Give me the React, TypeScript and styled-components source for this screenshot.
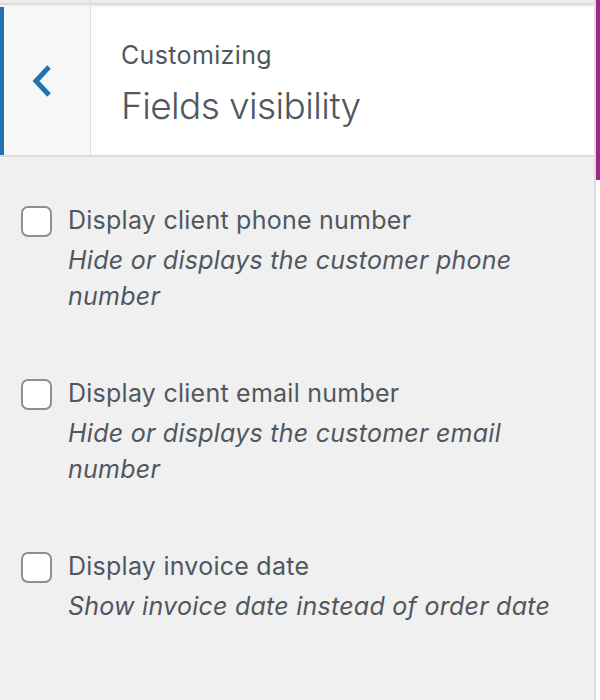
import React from "react";
import styled, { createGlobalStyle } from "styled-components";

const GlobalStyle = createGlobalStyle`
  html, body {
    margin: 0;
    padding: 0;
    background: #f0f0f0;
  }
  body {
    font-family: Inter, "Liberation Sans", Arial, sans-serif;
    color: #50575e;
  }
`;

interface Field {
  id: string;
  label: string;
  description: string;
}

const fields: Field[] = [
  {
    id: "phone",
    label: "Display client phone number",
    description: "Hide or displays the customer phone number",
  },
  {
    id: "email",
    label: "Display client email number",
    description: "Hide or displays the customer email number",
  },
  {
    id: "invoice-date",
    label: "Display invoice date",
    description: "Show invoice date instead of order date",
  },
];

const Page = styled.div`
  display: flex;
  width: 600px;
  min-height: 700px;
`;

const Panel = styled.div`
  width: 594px;
  border-right: 2px solid #dcdcde;
  background: #f0f0f0;
  display: flex;
  flex-direction: column;
`;

const SideStrip = styled.div`
  width: 4px;
  background: #ffffff;
`;

const Accent = styled.div`
  height: 180px;
  background: #a0268f;
`;

const TopStrip = styled.div`
  display: flex;
  height: 3px;
  border-bottom: 2px solid #dcdcde;
  margin-bottom: 1px;
  background: #ececec;
`;

const TopStripCell = styled.div`
  width: 90px;
  border-right: 1px solid #dcdcde;
`;

const Header = styled.div`
  display: flex;
  height: 148px;
  background: #ffffff;
  border-top: 1px solid #f0f0f0;
  border-bottom: 2px solid #dcdcde;
`;

const BackButton = styled.button`
  width: 91px;
  flex-shrink: 0;
  display: flex;
  align-items: center;
  justify-content: center;
  padding: 0 8px 0 0;
  margin: 0;
  background: #f6f7f7;
  border: none;
  border-left: 4px solid #2271b1;
  border-right: 1px solid #dcdcde;
  cursor: pointer;
`;

const TitleBlock = styled.div`
  display: flex;
  flex-direction: column;
  justify-content: center;
  padding: 4px 0 0 30px;
`;

const Overline = styled.span`
  font-size: 25px;
  line-height: 32px;
  letter-spacing: 0.35px;
  color: #50575e;
`;

const Title = styled.h3`
  margin: 13px 0 0;
  font-size: 37px;
  font-weight: 300;
  line-height: 44px;
  letter-spacing: -0.6px;
  color: #50575e;
`;

const Controls = styled.ul`
  list-style: none;
  margin: 0;
  padding: 45px 21px;
  display: flex;
  flex-direction: column;
  gap: 61px;
`;

const Control = styled.li`
  display: flex;
  align-items: flex-start;
  gap: 16px;
`;

const Checkbox = styled.input.attrs({ type: "checkbox" })`
  appearance: none;
  width: 31px;
  height: 31px;
  margin: 4px 0 0;
  flex-shrink: 0;
  border: 2px solid #8c8f94;
  border-radius: 7px;
  background: #ffffff;
  box-sizing: border-box;
`;

const TextBlock = styled.div`
  display: flex;
  flex-direction: column;
  gap: 4px;
`;

const Label = styled.label`
  font-size: 25px;
  line-height: 36px;
  letter-spacing: 0.25px;
  color: #50575e;
`;

const Description = styled.span`
  font-size: 25px;
  font-style: italic;
  line-height: 36px;
  letter-spacing: 0.25px;
  color: #50575e;
`;

const ChevronLeft = () => (
  <svg width="24" height="32" viewBox="0 0 24 32" aria-hidden="true">
    <polyline
      points="18,2 5,16 18,30"
      fill="none"
      stroke="#2271b1"
      strokeWidth="5"
    />
  </svg>
);

export default function App() {
  return (
    <>
      <GlobalStyle />
      <Page>
        <Panel>
          <TopStrip>
            <TopStripCell />
          </TopStrip>
          <Header>
            <BackButton aria-label="Back">
              <ChevronLeft />
            </BackButton>
            <TitleBlock>
              <Overline>Customizing</Overline>
              <Title>Fields visibility</Title>
            </TitleBlock>
          </Header>
          <Controls>
            {fields.map((field) => (
              <Control key={field.id}>
                <Checkbox id={field.id} />
                <TextBlock>
                  <Label htmlFor={field.id}>{field.label}</Label>
                  <Description>{field.description}</Description>
                </TextBlock>
              </Control>
            ))}
          </Controls>
        </Panel>
        <SideStrip>
          <Accent />
        </SideStrip>
      </Page>
    </>
  );
}
